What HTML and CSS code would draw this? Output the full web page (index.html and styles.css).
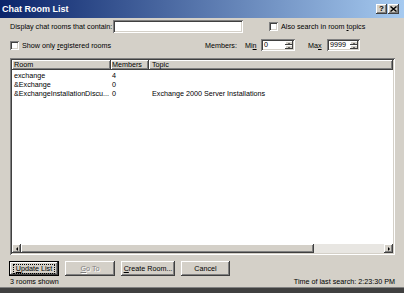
FILE: index.html
```html
<!DOCTYPE html>
<html>
<head>
  <title>Chat Room List</title>
  <link rel="stylesheet" href="styles.css">
</head>
<body>
  <div class="window">
    <div class="titlebar">
      <span class="title">Chat Room List</span>
      <span class="tbtn">?</span>
      <span class="tbtn">
        <svg width="7" height="6" viewBox="0 0 7 6"><path d="M0.5 0.5 L6.5 5.5 M6.5 0.5 L0.5 5.5" stroke="#000" stroke-width="1.4"/></svg>
      </span>
    </div>

    <div class="content">
      <div class="row row1">
        <span class="lbl-contain">Display chat rooms that contain:</span>
        <span class="field search"></span>
        <span class="check topics-check"></span>
        <span class="check-lbl">Also search in room <u>t</u>opics</span>
      </div>

      <div class="row row2">
        <span class="check"></span>
        <span class="check-lbl grow">Show only <u>r</u>egistered rooms</span>
        <span class="lbl-members">Members:</span>
        <span class="lbl-min">Mi<u>n</u></span>
        <span class="field spin spin-min">
          <span class="spin-val">0</span>
          <span class="spin-btns"><span class="sb up"></span><span class="sb down"></span></span>
        </span>
        <span class="lbl-max">Ma<u>x</u></span>
        <span class="field spin spin-max">
          <span class="spin-val">9999</span>
          <span class="spin-btns"><span class="sb up"></span><span class="sb down"></span></span>
        </span>
      </div>

      <div class="list">
        <div class="list-head">
          <span class="col-room hcell">Room</span>
          <span class="col-mem hcell">Members</span>
          <span class="col-topic hcell">Topic</span>
        </div>
        <div class="list-rows">
          <div class="list-row">
            <span class="col-room">exchange</span>
            <span class="col-mem">4</span>
            <span class="col-topic"></span>
          </div>
          <div class="list-row">
            <span class="col-room">&amp;Exchange</span>
            <span class="col-mem">0</span>
            <span class="col-topic"></span>
          </div>
          <div class="list-row">
            <span class="col-room">&amp;ExchangeInstallationDiscu...</span>
            <span class="col-mem">0</span>
            <span class="col-topic">Exchange 2000 Server Installations</span>
          </div>
        </div>
        <div class="hscroll">
          <span class="sarrow"><span class="tri-left"></span></span>
          <span class="thumb"></span>
          <span class="track"></span>
          <span class="sarrow"><span class="tri-right"></span></span>
        </div>
      </div>

      <div class="buttons">
        <span class="btn btn-default"><span class="focus"><u>U</u>pdate List</span></span>
        <span class="btn btn-disabled"><u>G</u>o To</span>
        <span class="btn btn-create"><u>C</u>reate Room...</span>
        <span class="btn btn-cancel">Cancel</span>
      </div>

      <div class="status">
        <span>3 rooms shown</span>
        <span>Time of last search: 2:23:30 PM</span>
      </div>
    </div>
  </div>
</body>
</html>
```

FILE: styles.css
```css
* {
  box-sizing: border-box;
}
html {
  background: #404040;
}
body {
  margin: 0;
  font-family: "Liberation Sans", Arial, sans-serif;
  font-size: 7.2px;
  color: #000;
}
u {
  text-decoration-thickness: 1px;
  text-underline-offset: 1px;
}
.window {
  width: 404px;
  height: 288px;
  background: #d4d0c8;
  border-bottom: 1px solid #808080;
  display: flex;
  flex-direction: column;
}

/* title bar */
.titlebar {
  height: 18px;
  flex: none;
  display: flex;
  align-items: center;
  padding: 0 5px 0 2px;
  background: linear-gradient(to right, #0a246a, #a6caf0);
}
.title {
  flex: 1;
  color: #fff;
  font-weight: bold;
  font-size: 9px;
}
.tbtn {
  width: 11px;
  height: 10px;
  margin-left: 1px;
  display: flex;
  align-items: center;
  justify-content: center;
  background: #d4d0c8;
  font-weight: bold;
  font-size: 8px;
  line-height: 10px;
  box-shadow: inset -1px -1px #404040, inset 1px 1px #fff, inset -2px -2px #808080;
}

.content {
  flex: 1;
  display: flex;
  flex-direction: column;
  padding: 0 9px 0 10px;
}
.row {
  display: flex;
  align-items: center;
  white-space: nowrap;
}
.row1 {
  height: 13px;
  margin-top: 2px;
}
.row2 {
  height: 12px;
  margin-top: 6px;
}
.lbl-contain {
  width: 103px;
}

/* sunken controls */
.field,
.check {
  background: #fff;
  box-shadow: inset 1px 1px #808080, inset -1px -1px #fff, inset 2px 2px #404040, inset -2px -2px #d4d0c8;
}
.search {
  width: 130px;
  height: 13px;
}
.check {
  width: 9px;
  height: 9px;
  flex: none;
}
.topics-check {
  margin-left: 26px;
}
.check-lbl {
  margin-left: 3px;
}
.grow {
  flex: 1;
}
.lbl-members {
  width: 40px;
}
.lbl-min {
  width: 16px;
}
.lbl-max {
  width: 19px;
  margin-left: 13px;
}
.spin {
  height: 12px;
  display: flex;
  padding: 2px;
}
.spin-min {
  width: 34px;
}
.spin-max {
  width: 33px;
  margin-right: 35px;
}
.spin-val {
  flex: 1;
  padding-left: 1px;
  line-height: 8px;
}
.spin-btns {
  width: 8px;
  display: flex;
  flex-direction: column;
}
.sb {
  flex: 1;
  background: #d4d0c8;
  box-shadow: inset -1px -1px #404040, inset 1px 1px #fff;
  display: flex;
  align-items: center;
  justify-content: center;
}
.sb::after {
  content: "";
  border-left: 1.5px solid transparent;
  border-right: 1.5px solid transparent;
}
.up::after {
  border-bottom: 1.5px solid #000;
}
.down::after {
  border-top: 1.5px solid #000;
}

/* list view */
.list {
  height: 197px;
  margin-top: 7px;
  padding: 2px;
  background: #fff;
  display: flex;
  flex-direction: column;
  box-shadow: inset 1px 1px #808080, inset -1px -1px #fff, inset 2px 2px #404040, inset -2px -2px #d4d0c8;
}
.list-head {
  height: 10px;
  display: flex;
}
.hcell {
  background: #d4d0c8;
  line-height: 10px;
  box-shadow: inset -1px -1px #404040, inset 1px 1px #fff, inset -2px -2px #808080;
}
.col-room {
  width: 99px;
  padding-left: 2px;
  overflow: hidden;
}
.col-mem {
  width: 38px;
  padding-left: 1px;
}
.col-topic {
  flex: 1;
  padding-left: 3px;
}
.list-rows {
  flex: 1;
  padding-top: 1px;
}
.list-row {
  height: 9px;
  line-height: 9px;
  display: flex;
  white-space: nowrap;
}
.hscroll {
  height: 9px;
  display: flex;
}
.sarrow {
  width: 9px;
  background: #d4d0c8;
  display: flex;
  align-items: center;
  justify-content: center;
  box-shadow: inset -1px -1px #404040, inset 1px 1px #fff, inset -2px -2px #808080;
}
.tri-left {
  border-top: 2px solid transparent;
  border-bottom: 2px solid transparent;
  border-right: 2px solid #000;
}
.tri-right {
  border-top: 2px solid transparent;
  border-bottom: 2px solid transparent;
  border-left: 2px solid #000;
}
.thumb {
  width: 293px;
  background: #d4d0c8;
  box-shadow: inset -1px -1px #404040, inset 1px 1px #fff, inset -2px -2px #808080;
}
.track {
  flex: 1;
  background: #e8e6e2;
}

/* push buttons */
.buttons {
  height: 15px;
  margin-top: 6px;
  margin-left: -1px;
  display: flex;
  gap: 6px;
}
.btn {
  width: 50px;
  height: 15px;
  display: flex;
  align-items: center;
  justify-content: center;
  background: #d4d0c8;
  box-shadow: inset -1px -1px #404040, inset 1px 1px #fff, inset -2px -2px #808080;
}
.btn-default {
  border: 1px solid #000;
}
.focus {
  padding: 0 2px;
  outline: 1px dotted #000;
  outline-offset: 0;
  line-height: 8px;
}
.btn-disabled {
  color: #808080;
  text-shadow: 1px 1px #fff;
}
.btn-create {
  width: 54px;
}
.btn-cancel {
  width: 49px;
}

.status {
  height: 10px;
  margin-top: 1px;
  display: flex;
  justify-content: space-between;
  line-height: 10px;
  white-space: nowrap;
}
```
